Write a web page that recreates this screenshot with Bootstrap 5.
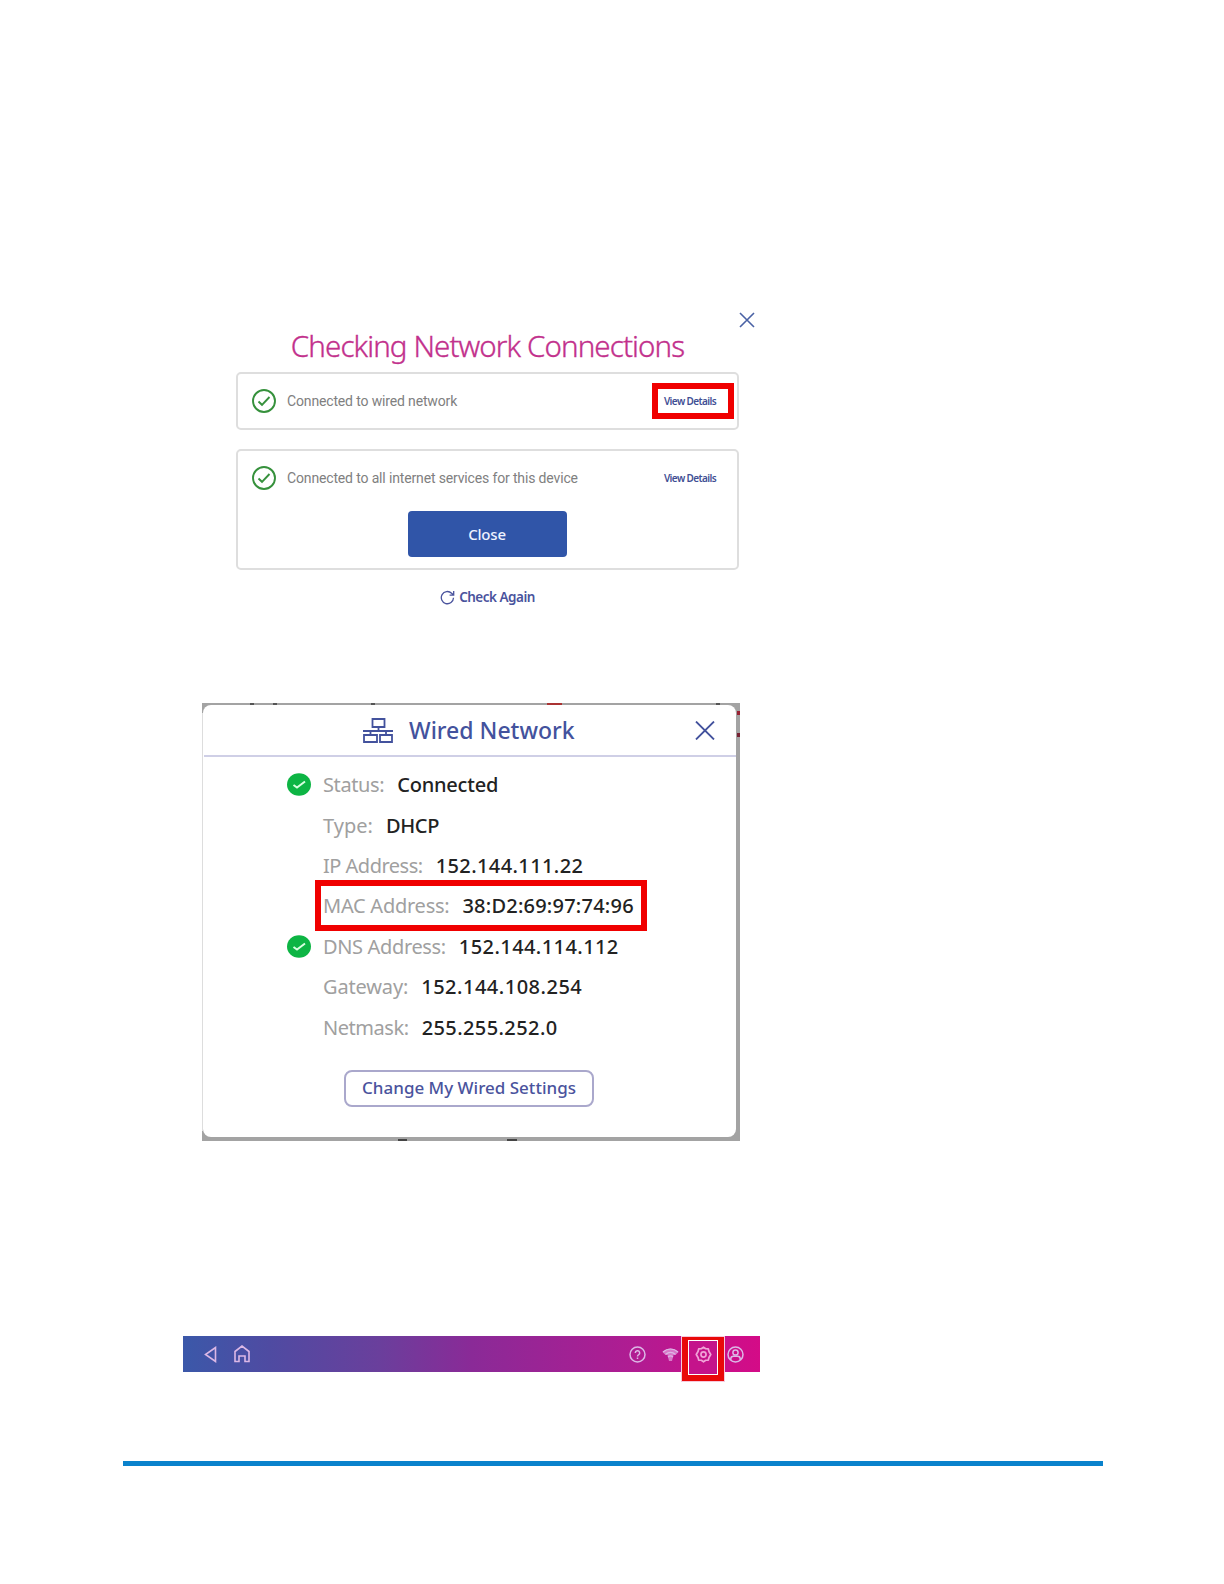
<!DOCTYPE html>
<html lang="en">
<head>
    <meta charset="UTF-8">
    <meta name="viewport" content="width=device-width, initial-scale=1.0">
    <title>Network Connections</title>
    <link href="https://cdn.jsdelivr.net/npm/bootstrap@5.3.0/dist/css/bootstrap.min.css" rel="stylesheet">
    <style>
        body {
            font-family: "Noto Sans", "Liberation Sans", sans-serif;
            background-color: #fff;
            line-height: 1;
            white-space: nowrap;
        }
        svg {
            display: block;
            flex-shrink: 0;
            fill: none;
            stroke: currentColor;
        }
        .page {
            width: 1224px;
            height: 1584px;
            padding-top: 312px;
            overflow: hidden;
        }

        /* Checking dialog */
        .checking {
            width: 519px;
            margin-left: 236px;
            color: #4a62a5;
        }
        .checking-body {
            width: 503px;
        }
        .checking-title {
            font-size: 29.5px;
            font-weight: 300;
            line-height: 40px;
            letter-spacing: -0.9px;
            color: #c2308c;
            -webkit-text-stroke: 0.35px #c2308c;
            margin: -2px 0 6px;
        }
        .status-box {
            border: 2px solid #dedede;
            border-radius: 5px;
            padding: 0 3px 0 14px;
        }
        .box-wired {
            height: 58px;
            margin-bottom: 19px;
        }
        .box-internet {
            height: 121px;
        }
        .status-line {
            height: 54px;
        }
        .ok-ring {
            color: #36913c;
            margin-right: 11px;
        }
        .status-text {
            font-family: Roboto, "Liberation Sans", sans-serif;
            font-size: 14px;
            letter-spacing: -0.15px;
            color: #808080;
        }
        .details-link {
            width: 82px;
            height: 36px;
            padding-right: 6px;
            font-size: 10px;
            font-weight: 600;
            color: #3f4f94;
            letter-spacing: -0.6px;
        }
        .marked {
            border: 6px solid #f00000;
        }
        .btn-close-dialog {
            width: 159px;
            height: 46px;
            padding: 0;
            border-radius: 4px;
            background-color: #3055a8;
            color: #eef2ff;
            font-size: 15px;
            font-weight: 500;
            letter-spacing: -0.2px;
            margin: 6px 12px 0 0;
        }
        .check-again {
            font-size: 13.5px;
            font-weight: 600;
            letter-spacing: -0.5px;
            color: #4a539d;
            margin-top: 20px;
        }

        /* Wired network dialog */
        .wired-frame {
            width: 538px;
            height: 438px;
            margin: 98px 0 0 202px;
            padding: 2px 4px 4px 1px;
            background:
                linear-gradient(#ddd, #ddd) 0 10px / 1px 418px no-repeat,
                linear-gradient(#a33, #a33) 345px 0 / 15px 2px no-repeat,
                linear-gradient(#555, #555) 48px 0 / 4px 2px no-repeat,
                linear-gradient(#555, #555) 71px 0 / 4px 2px no-repeat,
                linear-gradient(#555, #555) 169px 0 / 4px 2px no-repeat,
                linear-gradient(#555, #555) 514px 0 / 4px 2px no-repeat,
                linear-gradient(#923, #923) 100% 8px / 3px 4px no-repeat,
                linear-gradient(#723, #723) 100% 30px / 3px 4px no-repeat,
                linear-gradient(#444, #444) 196px 100% / 9px 2px no-repeat,
                linear-gradient(#444, #444) 305px 100% / 10px 2px no-repeat,
                #a3a3a3;
        }
        .wired {
            height: 432px;
            padding-left: 1px;
            border-radius: 8px;
            background-color: #fff;
        }
        .wired-head {
            height: 52px;
            border-bottom: 2px solid #cfcfe6;
            padding: 0 21px 0 159px;
            color: #43529d;
        }
        .wired-title {
            font-size: 23px;
            font-weight: 500;
            margin-left: 16px;
        }
        .wired-row {
            height: 40.4px;
            padding-left: 83px;
            font-size: 20px;
        }
        .row-mark {
            width: 36px;
        }
        .row-label {
            color: #a0a0a0;
            margin-right: 13px;
        }
        .row-value {
            color: #222;
            font-weight: 500;
        }
        .mac-box {
            width: 332px;
            height: 51px;
            margin: -1px 0 0 -8px;
            padding: 1px 0 0 2px;
        }
        .btn-change {
            width: 250px;
            height: 37px;
            padding: 0;
            border: 2px solid #aaa8cc;
            border-radius: 8px;
            color: #4a539d;
            font-size: 17px;
            font-weight: 500;
            margin: 22px 0 0 140px;
        }

        /* Bottom bar of the device */
        .device-bar {
            width: 577px;
            height: 36px;
            margin: 196px 0 0 183px;
            padding: 0 16px 0 21px;
            background: linear-gradient(90deg, #3b58a9 0%, #4f4ba2 15%, #6a3f9c 34%, #8a2a97 50%, #b01c92 78%, #d40b87 100%);
            color: #dcb8e6;
        }
        .wired-frame + .device-bar {
            margin-top: 195px;
        }
        .gear-box {
            width: 44px;
            height: 46px;
            margin: 10px 2px 0 2px;
            border: 1px solid #f6c9dc;
            background-color: #e90909;
            padding: 3px 6px 6px;
        }
        .gear-inner {
            height: 35px;
            padding-bottom: 6px;
            border: 1px solid #fff;
            background-color: #c4138b;
            color: #f0a3d8;
        }
        .footer-rule {
            width: 980px;
            height: 5px;
            margin: 89px 0 0 123px;
            background-color: #0a82cc;
        }
    </style>
</head>
<body>
    <div class="page">
        <div class="checking">
            <div class="d-flex justify-content-end">
                <svg width="16" height="16" viewBox="0 0 16 16" stroke-width="1.6"><path d="M1 1l14 14M15 1L1 15"/></svg>
            </div>
            <div class="checking-body">
                <h1 class="checking-title text-center">Checking Network Connections</h1>

                <div class="status-box box-wired">
                    <div class="status-line d-flex align-items-center">
                        <svg class="ok-ring" width="24" height="24" viewBox="0 0 24 24" stroke-width="1.9"><circle cx="12" cy="12" r="11"/><path d="M6.500 12.500l3.500 3.300L17.500 8"/></svg>
                        <span class="status-text">Connected to wired network</span>
                        <a class="details-link marked ms-auto d-flex align-items-center justify-content-center text-decoration-none">View Details</a>
                    </div>
                </div>

                <div class="status-box box-internet">
                    <div class="status-line d-flex align-items-center">
                        <svg class="ok-ring" width="24" height="24" viewBox="0 0 24 24" stroke-width="1.9"><circle cx="12" cy="12" r="11"/><path d="M6.500 12.500l3.500 3.300L17.500 8"/></svg>
                        <span class="status-text">Connected to all internet services for this device</span>
                        <a class="details-link ms-auto d-flex align-items-center justify-content-center text-decoration-none">View Details</a>
                    </div>
                    <div class="text-center">
                        <button class="btn btn-close-dialog">Close</button>
                    </div>
                </div>

                <div class="check-again d-flex justify-content-center align-items-center gap-1">
                    <svg width="15" height="15" viewBox="0 0 15 15" stroke-width="1.3"><path d="M13.500 7.800A6.100 6.100 0 1 1 11.600 3.200L13.300 4.800M13.700 1v4.200H9.600"/></svg>
                    <span>Check Again</span>
                </div>
            </div>
        </div>

        <div class="wired-frame">
            <div class="wired">
                <div class="wired-head d-flex align-items-center">
                    <svg width="30" height="25" viewBox="0 0 30 25" stroke-width="1.8"><path d="M9.500 1h12v8h-12zM1 17h13v7H1zM17 17h12v7H17zM15.500 9v4M0 13h30M7.500 13v4M23 13v4"/></svg>
                    <span class="wired-title">Wired Network</span>
                    <svg class="ms-auto" width="20" height="19" viewBox="0 0 20 19" stroke-width="1.8"><path d="M1 .5l18 18M19 .5l-18 18"/></svg>
                </div>
                <div id="wired-rows" class="pt-2"></div>
                <button class="btn btn-change">Change My Wired Settings</button>
            </div>
        </div>

        <div class="device-bar d-flex align-items-center">
            <svg width="13" height="17" viewBox="0 0 13 17" stroke-width="1.6"><path d="M11.500 1.500v14L1.500 8.500z"/></svg>
            <svg class="ms-3" width="18" height="18" viewBox="0 0 17 18" stroke-width="1.6"><path d="M1.500 16.500v-10L8.500 1l7 5.500v10h-4v-5.500h-6v5.500z"/></svg>
            <svg class="ms-auto" width="17" height="17" viewBox="0 0 17 17" stroke-width="1.5"><circle cx="8.500" cy="8.500" r="7.500"/><path d="M6.300 7a2.200 2.200 0 1 1 3.200 1.900c-.8.400-1 .8-1 1.500M8.500 11.500v1.500"/></svg>
            <svg class="ms-3" width="17" height="15" viewBox="0 0 17 15"><path stroke="none" fill="#d878c8" d="M.5 5C5 .3 12 .3 16.500 5L14 7.500l-2.500.5-1.500 6H7L5.500 8 3 7.500z" style="stroke:none"/><path stroke-width="1.200" d="M1 5C5.500 1 11.500 1 16 5M3.500 7.500c3-2.500 7-2.500 10 0M6 10c1.500-1.300 3.500-1.300 5 0"/></svg>
            <div class="gear-box">
                <div class="gear-inner d-flex align-items-center justify-content-center">
                    <svg width="17" height="17" viewBox="0 0 18 18" stroke-width="1.800"><path stroke-linejoin="round" d="M9 1.300l2.300 1.600 2.800.2.700 2.700L16.700 9l-1.900 3.200-.7 2.700-2.800.2L9 16.700l-2.300-1.600-2.800-.2-.7-2.700L1.300 9l1.900-3.200.7-2.700 2.800-.2z"/><circle cx="9" cy="9" r="2.700"/></svg>
                </div>
            </div>
            <svg width="17" height="17" viewBox="0 0 17 17" stroke-width="1.500"><circle cx="8.500" cy="8.500" r="7.500"/><circle cx="8.500" cy="6.500" r="2.600"/><path d="M3.800 14v-1.200c0-1.500 1-2.600 2.700-2.600h4c1.700 0 2.700 1.100 2.700 2.600V14"/></svg>
        </div>

        <div class="footer-rule"></div>
    </div>

    <script src="https://cdn.jsdelivr.net/npm/bootstrap@5.3.0/dist/js/bootstrap.bundle.min.js"></script>
    <script>
        // spacing: letter-spacing of the label and of the value, px
        const wiredRows = [
            { label: 'Status:', value: 'Connected', ok: true, spacing: [-0.4, -0.2] },
            { label: 'Type:', value: 'DHCP', spacing: [0, -0.3] },
            { label: 'IP Address:', value: '152.144.111.22', spacing: [-0.5, 0.4] },
            { label: 'MAC Address:', value: '38:D2:69:97:74:96', marked: true, spacing: [-0.25, 0.22] },
            { label: 'DNS Address:', value: '152.144.114.112', ok: true, spacing: [-0.35, 0.42] },
            { label: 'Gateway:', value: '152.144.108.254', spacing: [-0.15, 0.5] },
            { label: 'Netmask:', value: '255.255.252.0', spacing: [-0.45, 0.4] }
        ];
        const okIcon = '<svg width="24" height="24" viewBox="0 0 24 24"><ellipse cx="12" cy="11.500" rx="12" ry="11.300" fill="#0db544" stroke="none"/><path d="M6.500 12l3.500 2.500L18 8.500" stroke="#d8ffe0" stroke-width="2"/></svg>';

        function renderRows(rows) {
            const container = document.getElementById('wired-rows');
            rows.forEach(row => {
                const text = `<span class="row-label" style="letter-spacing: ${row.spacing[0]}px">${row.label}</span><span class="row-value" style="letter-spacing: ${row.spacing[1]}px">${row.value}</span>`;
                container.innerHTML += `
                    <div class="wired-row d-flex align-items-center">
                        <div class="row-mark">${row.ok ? okIcon : ''}</div>
                        ${row.marked ? `<div class="mac-box marked d-flex align-items-center">${text}</div>` : text}
                    </div>
                `;
            });
        }

        renderRows(wiredRows);
    </script>
</body>
</html>
